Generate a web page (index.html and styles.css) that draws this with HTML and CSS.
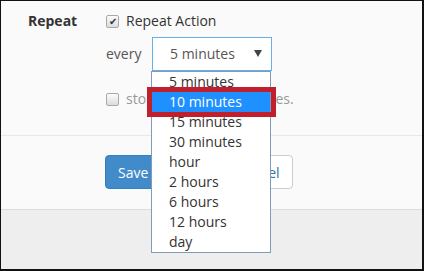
FILE: index.html
```html
<!DOCTYPE html>
<html lang="en">
<head>
    <meta charset="UTF-8">
    <title>Repeat Settings</title>
    <link rel="stylesheet" href="styles.css">
</head>
<body>
    <div class="frame">
        <div class="form">
            <div class="row">
                <span class="label">Repeat</span>
                <span class="check checked">&#10004;</span>
                <span class="check-text">Repeat Action</span>
            </div>
            <div class="row sub every-row">
                <span class="every">every</span>
                <div class="select">
                    <span>5 minutes</span>
                    <span class="caret"></span>
                </div>
            </div>
            <div class="row sub">
                <span class="check"></span>
                <span class="check-text muted">stop if the result changes.</span>
            </div>
        </div>
        <div class="actions">
            <button type="button" class="btn btn-primary">Save</button>
            <button type="button" class="btn btn-default">Cancel</button>
        </div>
        <div class="footer"></div>

        <ul class="dropdown">
            <li>5 minutes</li>
            <li class="active">10 minutes</li>
            <li>15 minutes</li>
            <li>30 minutes</li>
            <li>hour</li>
            <li>2 hours</li>
            <li>6 hours</li>
            <li>12 hours</li>
            <li>day</li>
        </ul>
        <div class="highlight"></div>
    </div>
</body>
</html>
```

FILE: styles.css
```css
* {
    box-sizing: border-box;
}

body {
    margin: 0;
    font-family: 'Open Sans', 'Liberation Sans', sans-serif;
    font-size: 14px;
    line-height: 20px;
    color: #333;
}

.frame {
    position: relative;
    width: 424px;
    height: 271px;
    display: flex;
    flex-direction: column;
    border: 1px solid #111;
    border-right-width: 2px;
    border-bottom-width: 2px;
    background-color: #fafafa;
}

.form {
    height: 135px;
    padding: 10px 0 0 27px;
    border-bottom: 1px solid #e8e8e8;
}

.row {
    display: flex;
    align-items: center;
    height: 20px;
}

.label {
    width: 78px;
    font-weight: 700;
}

.sub {
    padding-left: 78px;
    margin-top: 18px;
}

.every-row {
    height: 34px;
    margin-top: 6px;
}

.every {
    color: #555;
    width: 46px;
}

.select {
    display: flex;
    align-items: center;
    justify-content: space-between;
    width: 120px;
    height: 34px;
    padding: 0 9px 0 17px;
    border: 1px solid #66afe9;
    background-color: #fff;
    color: #555;
}

.caret {
    width: 0;
    height: 0;
    border-left: 4px solid transparent;
    border-right: 4px solid transparent;
    border-top: 7px solid #444;
    margin-top: -2px;
}

.check {
    width: 13px;
    height: 13px;
    margin-right: 7px;
    border: 1px solid #a9a9a9;
    border-radius: 2px;
    background: linear-gradient(#fcfcfc, #dcdcdc);
    font-size: 10px;
    line-height: 11px;
    text-align: center;
    color: #333;
}

.muted {
    color: #999;
}

.actions {
    height: 74px;
    padding: 19px 0 0 104px;
    display: flex;
    align-items: flex-start;
    gap: 62px;
    border-bottom: 1px solid #dcdcdc;
}

.btn {
    height: 34px;
    padding: 0 12px;
    font-family: inherit;
    font-size: 14px;
    border-radius: 4px;
    border: 1px solid transparent;
}

.btn-primary {
    background-color: #428bca;
    border-color: #357ebd;
    color: #fff;
}

.btn-default {
    background-color: #fff;
    border-color: #ccc;
    color: #3071a9;
}

.footer {
    flex: 1;
    background-color: #eee;
}

.dropdown {
    position: absolute;
    left: 150px;
    top: 70px;
    width: 120px;
    margin: 0;
    padding: 0;
    list-style: none;
    border: 1px solid #7f9db9;
    background-color: #fff;
}

.dropdown li {
    height: 20px;
    padding-left: 17px;
    color: #333;
}

.dropdown .active {
    background-color: #1e90ff;
    color: #fff;
}

.highlight {
    position: absolute;
    left: 146px;
    top: 86px;
    width: 129px;
    height: 30px;
    border: 5px solid #c01f2b;
}
```
